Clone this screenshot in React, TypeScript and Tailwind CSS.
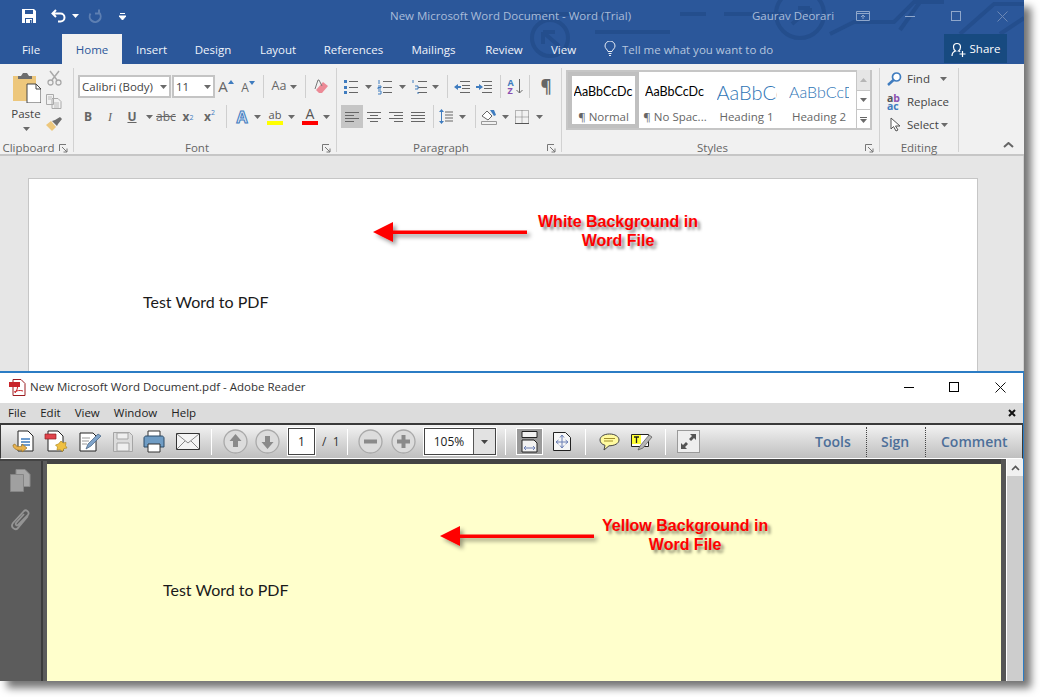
import React from "react";

const Caret = ({ color = "#6a6a6a" }: { color?: string }) => (
  <svg width="7" height="4" viewBox="0 0 7 4" className="shrink-0">
    <path d="M0 0h7L3.5 4z" fill={color} />
  </svg>
);

const Sep = ({ className = "" }: { className?: string }) => (
  <div className={`w-px h-[23px] bg-[#cfcfcf] shrink-0 ${className}`} />
);

const Launcher = () => (
  <svg width="9" height="9" viewBox="0 0 9 9">
    <path d="M.5 7V.5H7M3 3l5 5M8 4.5V8H4.5" fill="none" stroke="#777" />
  </svg>
);

const Lines = ({ kind }: { kind: "left" | "center" | "right" | "justify" }) => {
  const rows = {
    left: ["M1 1.5h14", "M1 4.5h9", "M1 7.5h14", "M1 10.5h9"],
    center: ["M1 1.5h14", "M4 4.5h8", "M1 7.5h14", "M4 10.5h8"],
    right: ["M1 1.5h14", "M6 4.5h9", "M1 7.5h14", "M6 10.5h9"],
    justify: ["M1 1.5h14", "M1 4.5h14", "M1 7.5h14", "M1 10.5h14"],
  }[kind];
  return (
    <svg width="16" height="12" viewBox="0 0 16 12">
      <path d={rows.join("")} stroke="#666" fill="none" />
    </svg>
  );
};

const ListIcon = ({ mode }: { mode: "bullet" | "number" | "multi" }) => (
  <svg width="16" height="16" viewBox="0 0 16 16">
    <path d="M6 2.5h9M6 8.5h9M6 13.5h9" stroke="#666" />
    {mode === "bullet" && <path d="M1 1h3v3H1zM1 7h3v3H1zM1 12h3v3H1z" fill="#3f7cbf" />}
    {mode === "number" && <path d="M2 1v4M1 7h3v1.5H1V10h3M1 12h3v3H1" stroke="#3f7cbf" fill="none" />}
    {mode === "multi" && <path d="M1 1v3M3 7h3v3H3M6 13v2" stroke="#3f7cbf" fill="none" />}
  </svg>
);

const Group = ({
  label,
  className,
  launcher = true,
  children,
}: {
  label: string;
  className: string;
  launcher?: boolean;
  children: React.ReactNode;
}) => (
  <div className={`relative h-[84px] border-r border-[#d2d2d2] shrink-0 ${className}`}>
    <div className="flex flex-col h-[72px]">{children}</div>
    <div className={`flex items-center justify-center h-[16px] text-[11.5px] leading-[16px] text-[#666] ${launcher ? "pr-[16px]" : ""}`}>{label}</div>
    {launcher && (
      <div className="absolute right-[5px] bottom-[-1px]">
        <Launcher />
      </div>
    )}
  </div>
);

const Row = ({ className = "", children }: { className?: string; children: React.ReactNode }) => (
  <div className={`flex items-center h-[23px] ${className}`}>{children}</div>
);

const Cell = ({ className, children }: { className: string; children: React.ReactNode }) => (
  <div className={`flex items-center justify-center shrink-0 h-full [&>svg]:shrink-0 ${className}`}>{children}</div>
);

function StyleTile({ sample, name, className, sampleClass }: { sample: string; name: string; className: string; sampleClass: string }) {
  return (
    <div className={`flex flex-col items-center shrink-0 h-full overflow-hidden ${className}`}>
      <div className={`h-[34px] mt-[3px] flex items-center w-[60px] overflow-hidden whitespace-nowrap ${sampleClass}`}>{sample}</div>
      <div className="text-[11.5px] text-[#666] leading-[16px] whitespace-nowrap">{name}</div>
    </div>
  );
}

const WordTitleBar = () => (
  <div className="relative flex items-center h-[34px] pb-[2px] text-[11.5px] text-[#a9bcd9]">
    <svg width="16" height="16" viewBox="0 0 16 16" className="ml-[21px] shrink-0">
      <path d="M1 1h12l2 2v12H1z" fill="#fff" />
      <path d="M4 2h8v4H4zM4 10h8v5H4z" fill="#2b579a" />
      <path d="M5 11h6v4H5z" fill="#fff" />
      <path d="M9 12h1.500v3H9z" fill="#2b579a" />
    </svg>
    <svg width="16" height="14" viewBox="0 0 16 14" className="ml-[14px] shrink-0">
      <path d="M5 1L1.500 4.500 5 8M2 4.500h7.500a3.800 3.800 0 0 1 0 8H7" fill="none" stroke="#fff" strokeWidth="2" />
    </svg>
    <div className="ml-[5px] mb-px">
      <Caret color="#fff" />
    </div>
    <svg width="15" height="15" viewBox="0 0 15 15" className="ml-[8px] shrink-0">
      <path d="M3 3.500a5.500 5.500 0 1 0 8.500 1M3 .5v4h4" fill="none" stroke="#5d7fb2" strokeWidth="2" transform="matrix(-1 0 0 1 15 0)" />
    </svg>
    <svg width="7" height="7" viewBox="0 0 7 7" className="ml-[17px] shrink-0">
      <path d="M1 .5h5M0 3h7L3.500 7z" stroke="#fff" strokeWidth="1" fill="#fff" />
    </svg>
    <div className="ml-[264px] whitespace-nowrap w-[362px]">New Microsoft Word Document - Word (Trial)</div>
    <div className="whitespace-nowrap w-[104px]">Gaurav Deorari</div>
    <svg width="14" height="10" viewBox="0 0 14 10" className="shrink-0">
      <path d="M.5.5h13v9H.5zM1 2.500h12M7 8V4M5 6l2-2 2 2" fill="none" stroke="#8fa7cb" />
    </svg>
    <div className="ml-[35px] w-[10px] h-px bg-[#8fa7cb]" />
    <div className="ml-[36px] w-[10px] h-[10px] border border-[#8fa7cb]" />
    <svg width="11" height="11" viewBox="0 0 11 11" className="ml-[36px] shrink-0">
      <path d="M.5.5l10 10M10.500.5l-10 10" stroke="#6c88b5" />
    </svg>
  </div>
);

const WordTabs = () => (
  <div className="relative flex items-stretch h-[30px] text-[11.5px] text-[#f0f4fa]">
    <Cell className="w-[62px] pt-[2px]">File</Cell>
    <Cell className="w-[60px] pt-[2px] bg-[#f1f1f1] text-[#2b579a]">Home</Cell>
    <Cell className="w-[59px] pt-[2px]">Insert</Cell>
    <Cell className="w-[64px] pt-[2px]">Design</Cell>
    <Cell className="w-[66px] pt-[2px]">Layout</Cell>
    <Cell className="w-[85px] pt-[2px]">References</Cell>
    <Cell className="w-[75px] pt-[2px]">Mailings</Cell>
    <Cell className="w-[66px] pt-[2px]">Review</Cell>
    <Cell className="w-[53px] pt-[2px]">View</Cell>
    <svg width="12" height="15" viewBox="0 0 12 15" className="ml-[14px] mt-[7px] shrink-0">
      <path d="M4 10.500C3.500 8.500 1 7.500 1 5a5 5 0 0 1 10 0c0 2.500-2.500 3.500-3 5.500zM4.500 12.500h3M5 14.500h2" fill="none" stroke="#e8edf5" />
    </svg>
    <div className="ml-[6px] w-[151px] pt-[2px] flex items-center whitespace-nowrap text-[#b6c6de]">Tell me what you want to do</div>
    <div className="ml-[171px] flex items-center justify-center gap-[4px] w-[63px] h-[29px] pt-px bg-[#174a80] text-white">
      <svg width="15" height="15" viewBox="0 0 15 15" className="shrink-0">
        <path d="M1 14c0-3 2-4.500 3.500-5C3 8 2.500 6.500 2.500 5a3.500 3.500 0 0 1 7 0c0 1.500-.5 3-2 4 .7.2 1.200.5 1.700.9M11.500 9v6M8.500 12h6" fill="none" stroke="#fff" strokeWidth="1.200" />
      </svg>
      Share
    </div>
  </div>
);

const ClipboardGroup = () => (
  <Group label="Clipboard" className="w-[74px]">
    <div className="flex">
      <div className="flex flex-col items-center w-[46px] pl-[6px] pt-[4px]">
        <svg width="29" height="31" viewBox="0 0 29 31">
          <path d="M1 4h23v25H1z" fill="#edc77c" />
          <path d="M6 4h3l2-3h4l2 3h3v3H6z" fill="#6e6e6e" />
          <path d="M15 12h9l5 5v14H15z" fill="#fff" stroke="#444" />
          <path d="M24 12v5h5" fill="none" stroke="#444" />
        </svg>
        <div className="text-[11.5px] leading-[16px] mt-[3px] text-[#444]">Paste</div>
        <div className="mt-[5px]">
          <Caret />
        </div>
      </div>
      <div className="flex flex-col items-center gap-[8px] w-[20px] ml-[-2px] pt-[2px]">
        <svg width="15" height="16" viewBox="0 0 15 16">
          <path d="M3 1l7 9M12 1L5 10" stroke="#a9a9a9" strokeWidth="1.500" />
          <circle cx="3.500" cy="12.500" r="2.500" fill="none" stroke="#a9a9a9" strokeWidth="1.300" />
          <circle cx="11.500" cy="12.500" r="2.500" fill="none" stroke="#a9a9a9" strokeWidth="1.300" />
        </svg>
        <svg width="16" height="15" viewBox="0 0 16 15">
          <path d="M.5.5h7v10h-7zM6 4.500h6l3 3v7H6z" fill="#f1f1f1" stroke="#aaa" />
          <path d="M8 9h5M8 11h5M8 13h5M2 3h4M2 5h3" stroke="#bbb" />
        </svg>
        <svg width="16" height="14" viewBox="0 0 16 14">
          <path d="M0 8l5-4 5 6-4 4z" fill="#edc77c" />
          <path d="M6 4l3-1 5-3 2 2-4 5-1 2z" fill="#6e6e6e" />
        </svg>
      </div>
    </div>
  </Group>
);

const FontGroup = () => (
  <Group label="Font" className="w-[263px]">
    <Row className="mt-[7px] ml-[4px]">
      <div className="flex items-center justify-between shrink-0 w-[93px] h-[23px] px-[2px] bg-white border-2 border-[#c4c4c4] text-[11.5px] text-[#444] whitespace-nowrap">
        Calibri (Body)
        <Caret />
      </div>
      <div className="flex items-center justify-between shrink-0 ml-px w-[43px] h-[23px] px-[2px] bg-white border-2 border-[#c4c4c4] text-[11.5px] text-[#444]">
        11
        <Caret />
      </div>
      <Cell className="w-[22px] text-[15px] text-[#666]">
        A<span className="mb-[10px]"><svg width="6" height="4" viewBox="0 0 6 4"><path d="M3 0l3 4H0z" fill="#3f7cbf" /></svg></span>
      </Cell>
      <Cell className="w-[22px] text-[12px] text-[#666] pt-[2px]">
        A<span className="mb-[10px]"><svg width="6" height="4" viewBox="0 0 6 4"><path d="M0 0h6L3 4z" fill="#3f7cbf" /></svg></span>
      </Cell>
      <Cell className="w-[4px]"><span /></Cell>
      <Sep />
      <Cell className="w-[41px] gap-[4px] text-[12.500px] text-[#666]">
        Aa
        <Caret />
      </Cell>
      <Sep />
      <Cell className="w-[30px]">
        <svg width="15" height="15" viewBox="0 0 15 15">
          <path d="M2 11l7-8 5 4-6 7H5z" fill="#ec8a96" />
          <path d="M1 10L4 1h1l3 6" fill="none" stroke="#777" />
        </svg>
      </Cell>
    </Row>
    <Row className="mt-[7px] ml-[3px] text-[#666]">
      <Cell className="w-[22px] font-bold text-[12px]">B</Cell>
      <Cell className="w-[22px] italic text-[12px] font-['Liberation_Serif',serif]">I</Cell>
      <Cell className="w-[22px] font-bold text-[12px] underline">U</Cell>
      <Cell className="w-[12px]"><Caret /></Cell>
      <Cell className="w-[22px] text-[12px] line-through">abc</Cell>
      <Cell className="w-[22px] font-bold text-[12px]">x<sub className="text-[7px] font-normal text-[#3f7cbf]">2</sub></Cell>
      <Cell className="w-[21px] font-bold text-[12px]">x<sup className="text-[7px] font-normal text-[#3f7cbf]">2</sup></Cell>
      <Cell className="w-[6px]"><span /></Cell>
      <Sep />
      <Cell className="w-[6px]"><span /></Cell>
      <Cell className="w-[18px] text-[16px] font-bold text-[#dce8f6] [-webkit-text-stroke:1px_#3f7cbf]">A</Cell>
      <Cell className="w-[12px]"><Caret /></Cell>
      <Cell className="w-[20px] ml-[2px]">
        <div className="flex flex-col items-center w-[16px]">
          <div className="text-[11px] leading-[11px] text-[#555]">ab</div>
          <div className="w-[16px] h-[4px] bg-[#ffff00] mt-px" />
        </div>
      </Cell>
      <Cell className="w-[12px]"><Caret /></Cell>
      <Cell className="w-[22px] ml-[2px]">
        <div className="flex flex-col items-center w-[16px]">
          <div className="text-[14px] leading-[12px] text-[#555]">A</div>
          <div className="w-[16px] h-[4px] bg-[#ff0000] mt-px" />
        </div>
      </Cell>
      <Cell className="w-[10px]"><Caret /></Cell>
    </Row>
  </Group>
);

const ParagraphGroup = () => (
  <Group label="Paragraph" className="w-[225px]">
    <Row className="mt-[7px] ml-[5px]">
      <Cell className="w-[18px]"><ListIcon mode="bullet" /></Cell>
      <Cell className="w-[16px]"><Caret /></Cell>
      <Cell className="w-[18px]"><ListIcon mode="number" /></Cell>
      <Cell className="w-[16px]"><Caret /></Cell>
      <Cell className="w-[20px]"><ListIcon mode="multi" /></Cell>
      <Cell className="w-[10px]"><Caret /></Cell>
      <Cell className="w-[7px]"><span /></Cell>
      <Sep />
      <Cell className="w-[28px]">
        <svg width="16" height="12" viewBox="0 0 16 12">
          <path d="M6 .5h10M8 4.500h8M8 7.500h8M6 11.500h10" stroke="#666" />
          <path d="M0 6l4-3v2h3v2H4v2z" fill="#3f7cbf" />
        </svg>
      </Cell>
      <Cell className="w-[16px]">
        <svg width="16" height="12" viewBox="0 0 16 12">
          <path d="M6 .5h10M8 4.500h8M8 7.500h8M6 11.500h10" stroke="#666" />
          <path d="M7 6L3 3v2H0v2h3v2z" fill="#3f7cbf" />
        </svg>
      </Cell>
      <Cell className="w-[8px]"><span /></Cell>
      <Sep />
      <Cell className="w-[28px] gap-[2px]">
        <div className="flex flex-col text-[9px] leading-[8px] font-bold">
          <span className="text-[#3f7cbf]">A</span>
          <span className="text-[#8a4fb0]">Z</span>
        </div>
        <svg width="7" height="15" viewBox="0 0 7 15">
          <path d="M3.500 0v14M.5 11l3 3 3-3" fill="none" stroke="#666" />
        </svg>
      </Cell>
      <Sep />
      <Cell className="w-[32px] text-[17px] font-bold text-[#666]">¶</Cell>
    </Row>
    <Row className="mt-[7px] ml-[4px]">
      <Cell className="w-[22px] bg-[#c6c6c6]"><Lines kind="left" /></Cell>
      <Cell className="w-[22px]"><Lines kind="center" /></Cell>
      <Cell className="w-[22px]"><Lines kind="right" /></Cell>
      <Cell className="w-[22px]"><Lines kind="justify" /></Cell>
      <Cell className="w-[4px]"><span /></Cell>
      <Sep />
      <Cell className="w-[24px]">
        <svg width="14" height="15" viewBox="0 0 14 15">
          <path d="M6 3h8M6 6h8M6 9h8M6 12h8" stroke="#666" />
          <path d="M2.500 0L5 3H0zM2.500 15L0 12h5zM2 3h1v9H2z" fill="#3f7cbf" />
        </svg>
      </Cell>
      <Cell className="w-[8px]"><Caret /></Cell>
      <Cell className="w-[9px]"><span /></Cell>
      <Sep />
      <Cell className="w-[26px]">
        <svg width="16" height="16" viewBox="0 0 16 16">
          <path d="M1 7l5-5 5 5-4 4z" fill="#fff" stroke="#666" />
          <path d="M9 1h4l2 5-2 1z" fill="#3f7cbf" />
          <path d="M.5 12.500h15v3H.5z" fill="#f1f1f1" stroke="#999" />
        </svg>
      </Cell>
      <Cell className="w-[7px]"><Caret /></Cell>
      <Cell className="w-[26px]">
        <svg width="14" height="14" viewBox="0 0 14 14">
          <path d="M.5.5h13v13H.5zM7 .5v13M.5 7h13" fill="none" stroke="#777" strokeDasharray="1 1" />
          <path d="M0 13.500h14" stroke="#555" />
        </svg>
      </Cell>
      <Cell className="w-[8px]"><Caret /></Cell>
    </Row>
  </Group>
);

const StylesGroup = () => (
  <Group label="Styles" className="w-[318px]">
    <div className="flex h-[60px] mt-[2px] ml-[4px] w-[306px] bg-white border-2 border-[#c6c6c6]">
      <StyleTile
        sample="AaBbCcDc"
        name="¶ Normal"
        className="w-[71px] shadow-[inset_0_0_0_4px_#c0c0c0]"
        sampleClass="text-[12.500px] text-black font-['Lato',sans-serif]"
      />
      <StyleTile sample="AaBbCcDc" name="¶ No Spac..." className="w-[72px]" sampleClass="text-[12.500px] text-black font-['Lato',sans-serif]" />
      <StyleTile sample="AaBbCc" name="Heading 1" className="w-[71px]" sampleClass="text-[20px] font-light text-[#2e74b5] font-['Lato',sans-serif]" />
      <StyleTile sample="AaBbCcD" name="Heading 2" className="w-[74px]" sampleClass="text-[16px] font-light text-[#2e74b5] font-['Lato',sans-serif]" />
      <div className="flex flex-col w-[14px] shrink-0 border-l border-[#c6c6c6] mt-[-2px] mb-[-2px] divide-y divide-[#c6c6c6]">
        <div className="flex items-center justify-center h-[21px] bg-[#e6e6e6]">
          <svg width="7" height="4" viewBox="0 0 7 4"><path d="M3.500 0L7 4H0z" fill="#b5b5b5" /></svg>
        </div>
        <div className="flex items-center justify-center h-[19px]"><Caret /></div>
        <div className="flex flex-col items-center justify-center gap-px h-[20px]">
          <div className="w-[7px] h-px bg-[#666]" />
          <Caret />
        </div>
      </div>
    </div>
  </Group>
);

const EditingGroup = () => (
  <Group label="Editing" className="w-[79px]" launcher={false}>
    <div className="flex flex-col pl-[7px] mt-[-1px] text-[11.5px] text-[#444]">
      <div className="flex items-center h-[23px]">
        <svg width="15" height="14" viewBox="0 0 15 14" className="shrink-0">
          <circle cx="9.500" cy="5" r="4" fill="#fff" stroke="#3f7cbf" strokeWidth="1.700" />
          <path d="M6.500 8L1 13" stroke="#3f7cbf" strokeWidth="2.500" />
        </svg>
        <span className="ml-[5px]">Find</span>
        <span className="ml-[10px]"><Caret /></span>
      </div>
      <div className="flex items-center h-[23px]">
        <div className="w-[16px] text-[10.500px] leading-[8px] font-bold text-[#555] shrink-0">
          a<span className="text-[#8a4fb0]">b</span>
          <br />
          <span className="text-[#3f7cbf]">ac</span>
        </div>
        <span className="ml-[4px]">Replace</span>
      </div>
      <div className="flex items-center h-[23px]">
        <svg width="11" height="15" viewBox="0 0 11 15" className="ml-[3px] shrink-0">
          <path d="M1 1v11l2.500-2.500L6 14l2-1-2.500-4H10z" fill="#fff" stroke="#555" />
        </svg>
        <span className="ml-[6px]">Select</span>
        <span className="ml-[2px]"><Caret /></span>
      </div>
    </div>
  </Group>
);

const WordWindow = () => (
  <div className="flex flex-col h-[371px] shrink-0">
    <div className="relative bg-[#2b579a] overflow-hidden">
      <svg width="1024" height="64" viewBox="0 0 1024 64" className="absolute inset-0">
        <g fill="none" stroke="#244e8d" strokeWidth="4">
          <path d="M530 14h80M595 32h75M680 14h26M724 14h60" />
          <circle cx="550" cy="38" r="18" />
          <circle cx="800" cy="14" r="24" />
          <path d="M543 32l16 14M543 32h12M543 32v12M792 24l18-16M810 8h-12M810 8v12" />
          <path d="M830 34l24-12h40l20-20h30M900 30l20-28M960 34l34-30h30M1000 34l24-16" />
        </g>
      </svg>
      <WordTitleBar />
      <WordTabs />
    </div>
    <div className="flex h-[92px] pt-[4px] bg-[#f1f1f1] border-b-2 border-[#c6c6c6] relative shrink-0">
      <ClipboardGroup />
      <FontGroup />
      <ParagraphGroup />
      <StylesGroup />
      <EditingGroup />
      <svg width="11" height="6" viewBox="0 0 11 6" className="absolute left-[1003px] top-[78px]">
        <path d="M1 5l4.500-4L10 5" fill="none" stroke="#666" strokeWidth="2" />
      </svg>
    </div>
    <div className="flex-1 min-h-0 bg-[#e6e6e6] pl-[28px] pt-[22px] overflow-hidden border-r border-[#d0d0d0]">
      <div className="w-[950px] h-[300px] bg-white border border-[#c6c6c6] pl-[114px] pt-[112px]">
        <div className="font-['Lato',sans-serif] text-[16px] leading-[22px] text-[#1a1a1a]">Test Word to PDF</div>
      </div>
    </div>
  </div>
);

const ToolIcon = ({ className, children }: { className: string; children: React.ReactNode }) => (
  <Cell className={className}>{children}</Cell>
);

const TSep = () => <div className="w-px h-[26px] bg-[#555] border-r border-white shrink-0" />;

const RoundBtn = ({ d }: { d: string }) => (
  <svg width="25" height="25" viewBox="0 0 25 25" className="shrink-0">
    <circle cx="12.500" cy="12.500" r="11.500" fill="#dcdcdc" stroke="#a9a9a9" strokeWidth="1.300" />
    <path d={d} fill="#8a8a8a" />
  </svg>
);

const ReaderToolbar = () => (
  <div className="flex items-center h-[36px] shrink-0 bg-gradient-to-b from-[#f2f2f2] to-[#bfbfbf] border-t-2 border-b border-t-[#3a3a3a] border-b-white border-x border-x-[#3a3a3a]">
    <ToolIcon className="w-[44px]">
      <svg width="23" height="23" viewBox="0 0 23 23">
        <path d="M6 1h10l5 5v15H6z" fill="#fff" stroke="#222" />
        <path d="M9 9h9M9 12h9M9 15h9" stroke="#3f7cbf" strokeWidth="1.500" />
        <path d="M1 15c0 4 5 6 9 5v2l5-4-5-4v2c-3 1-6 1-7-2z" fill="#e9b24d" stroke="#9b7424" strokeWidth=".7" />
      </svg>
    </ToolIcon>
    <ToolIcon className="w-[22px]">
      <svg width="24" height="23" viewBox="0 0 24 23">
        <path d="M4 1h10l5 5v15H4z" fill="#fff" stroke="#222" />
        <path d="M1 4h11v5H1z" fill="#e0434b" stroke="#8c1f24" strokeWidth=".7" />
        <path d="M17 11l2 2 3-.5-.5 3 1.500 2.500-3 .5-1.500 3-2.500-2-3 .5.500-3-2-2 3-1z" fill="#f0c040" stroke="#b08a20" strokeWidth=".7" />
      </svg>
    </ToolIcon>
    <ToolIcon className="w-[46px]">
      <svg width="22" height="20" viewBox="0 0 22 20">
        <path d="M1 1h13l3 3v15H1z" fill="#fff" stroke="#222" />
        <path d="M3 6h8M3 9h7M3 12h5" stroke="#999" />
        <path d="M7 17l2-5L19 2l3 2-10 10z" fill="#7fa3c9" stroke="#44607f" strokeWidth=".7" />
      </svg>
    </ToolIcon>
    <ToolIcon className="w-[19px]">
      <svg width="20" height="20" viewBox="0 0 20 20">
        <path d="M.5.5h16l3 3v16H.5z" fill="#dcdcdc" stroke="#a5a5a5" />
        <path d="M4 1h11v6H4zM4 11h12v8H4z" fill="#efefef" stroke="#a5a5a5" />
      </svg>
    </ToolIcon>
    <ToolIcon className="w-[44px]">
      <svg width="22" height="23" viewBox="0 0 22 23">
        <path d="M5 1h12v6H5z" fill="#fff" stroke="#333" />
        <path d="M1 8c0-1 1-2 2-2h16c1 0 2 1 2 2v9H1z" fill="#6f9cc4" stroke="#2c4a66" />
        <path d="M5 14h12v8H5z" fill="#fff" stroke="#333" />
      </svg>
    </ToolIcon>
    <ToolIcon className="w-[24px]">
      <svg width="24" height="17" viewBox="0 0 24 17">
        <path d="M.5.5h23v16H.5z" fill="#f4f4f4" stroke="#333" />
        <path d="M1 1l11 9 11-9M1 16l8-8M23 16l-8-8" fill="none" stroke="#888" />
      </svg>
    </ToolIcon>
    <div className="w-[11px] shrink-0" />
    <TSep />
    <ToolIcon className="w-[46px]"><RoundBtn d="M12.500 5l6 7h-3.500v6h-5v-6H6.500z" /></ToolIcon>
    <ToolIcon className="w-[18px]"><RoundBtn d="M12.500 20l-6-7H10V7h5v6h3.500z" /></ToolIcon>
    <div className="ml-[12px] flex items-center justify-center shrink-0 w-[27px] h-[27px] bg-white border border-[#444] outline outline-1 outline-white text-[12px] text-[#222]">1</div>
    <div className="ml-[7px] w-[25px] shrink-0 text-[12px] text-[#333] whitespace-nowrap">/&nbsp;&nbsp;1</div>
    <TSep />
    <ToolIcon className="w-[45px]"><RoundBtn d="M6 10.500h13v4H6z" /></ToolIcon>
    <ToolIcon className="w-[21px]"><RoundBtn d="M6 10.500h4.500V6h4v4.500H19v4h-4.500V19h-4v-4.500H6z" /></ToolIcon>
    <div className="ml-[10px] flex w-[72px] h-[27px] bg-white border border-[#444] outline outline-1 outline-white shrink-0">
      <div className="flex-1 flex items-center justify-center text-[12px] text-[#222]">105%</div>
      <div className="flex items-center justify-center w-[22px] bg-[#e2e2e2] border-l border-[#555]"><Caret color="#444" /></div>
    </div>
    <div className="w-[9px] shrink-0" />
    <TSep />
    <div className="ml-[10px] flex items-center justify-center w-[27px] h-[27px] bg-[#9a9a9a] border border-white shrink-0">
      <svg width="18" height="22" viewBox="0 0 18 22">
        <path d="M1 .5h15v6H1z" fill="#f2f2f2" stroke="#222" />
        <path d="M1 9h12l3 3v9H1z" fill="#f2f2f2" stroke="#222" />
        <path d="M3 17h11M3 17l2-2M3 17l2 2M14 17l-2-2M14 17l-2 2" stroke="#6b7fb5" fill="none" />
      </svg>
    </div>
    <ToolIcon className="w-[38px]">
      <svg width="18" height="19" viewBox="0 0 18 19">
        <path d="M.5.5h12l5 5v13H.5z" fill="#f6f6f6" stroke="#222" />
        <path d="M9 3v13M3 10h12M9 3L7 5.500M9 3l2 2.500M9 16l-2-2.500M9 16l2-2.500M3 10l2.500-2M3 10l2.500 2M15 10l-2.500-2M15 10l-2.500 2" stroke="#6b7fb5" fill="none" />
      </svg>
    </ToolIcon>
    <div className="w-[4px] shrink-0" />
    <TSep />
    <ToolIcon className="w-[46px]">
      <svg width="21" height="18" viewBox="0 0 21 18">
        <path d="M10.500 1C5 1 1 3.500 1 7c0 2.500 2 4.500 5 5.300L5 17l5-4.200c5.500 0 10-2.300 10-5.800S16 1 10.500 1z" fill="#fffaa0" stroke="#444" />
        <path d="M5 5.500h11M5 8h9" stroke="#a08d2a" />
      </svg>
    </ToolIcon>
    <ToolIcon className="w-[20px]">
      <svg width="22" height="19" viewBox="0 0 22 19">
        <path d="M.5 2.500h17v12H.5z" fill="#fff" stroke="#222" />
        <path d="M1 3h9v9H1z" fill="#ffff33" />
        <path d="M3 5h5M5.500 5v6" stroke="#222" strokeWidth="1.300" />
        <path d="M7 18l2-4 9-11 3 2-9 11z" fill="#b5b5b5" stroke="#555" strokeWidth=".7" />
      </svg>
    </ToolIcon>
    <div className="w-[13px] shrink-0" />
    <TSep />
    <div className="ml-[11px] flex items-center justify-center w-[23px] h-[23px] bg-[#eee] border border-[#9a9a9a] shrink-0">
      <svg width="19" height="19" viewBox="0 0 19 19">
        <path d="M11 2h6v6l-2-2-3 3-2-2 3-3zM8 17H2v-6l2 2 3-3 2 2-3 3z" fill="#555" />
      </svg>
    </div>
    <div className="ml-[115px] w-[37px] text-[14px] font-semibold text-[#4d6f99]">Tools</div>
    <div className="ml-[14px] h-[30px] border-l border-dotted border-[#444]" />
    <div className="ml-[14px] w-[30px] text-[14px] font-semibold text-[#4d6f99]">Sign</div>
    <div className="ml-[14px] h-[30px] border-l border-dotted border-[#444]" />
    <div className="ml-[15px] text-[14px] font-semibold text-[#4d6f99] whitespace-nowrap">Comment</div>
  </div>
);

const ReaderWindow = () => (
  <div className="flex flex-col h-[310px] shrink-0 border-t-2 border-r border-[#2b7cc4] bg-white min-h-0">
    <div className="flex items-center h-[30px] pb-[2px] shrink-0 text-[11.5px] text-[#333]">
      <svg width="17" height="17" viewBox="0 0 17 17" className="ml-[9px] shrink-0">
        <path d="M4 .5h8l4 4v12H4z" fill="#fff" stroke="#9b1c20" />
        <path d="M0 3h11v5H0z" fill="#c8242a" />
        <path d="M6 14c2-2 3-6 2.500-8.500M5 13c3-1.500 6-2 9-1" fill="none" stroke="#c8242a" />
      </svg>
      <span className="ml-[4px] whitespace-nowrap">New Microsoft Word Document.pdf - Adobe Reader</span>
      <div className="ml-auto w-[10px] h-px bg-black" />
      <div className="ml-[35px] w-[10px] h-[10px] border border-black" />
      <svg width="11" height="11" viewBox="0 0 11 11" className="ml-[36px] mr-[17px] shrink-0">
        <path d="M.5.5l10 10M10.500.5l-10 10" stroke="#111" />
      </svg>
    </div>
    <div className="flex items-center h-[20px] shrink-0 bg-[#dcdcdc] text-[11.5px] text-[#222] pl-[8px] gap-[14px]">
      <span>File</span>
      <span>Edit</span>
      <span>View</span>
      <span>Window</span>
      <span>Help</span>
      <svg width="8" height="8" viewBox="0 0 8 8" className="ml-auto mr-[7px] shrink-0">
        <path d="M1 1l6 6M7 1L1 7" stroke="#111" strokeWidth="2" />
      </svg>
    </div>
    <ReaderToolbar />
    <div className="flex-1 min-h-0 flex bg-[#444] pt-[5px] overflow-hidden">
      <div className="flex flex-col items-center w-[43px] mt-[-3px] bg-[#5c5c5c] border-r-2 border-[#3c3c3c] shrink-0 pt-[8px] gap-[16px]">
        <svg width="21" height="23" viewBox="0 0 21 23">
          <path d="M6 .5h9l5 5v12H6z" fill="#a8a8a8" stroke="#8a8a8a" />
          <path d="M.5 5.500h13v17H.5z" fill="#a0a0a0" stroke="#858585" />
        </svg>
        <svg width="21" height="24" viewBox="0 0 21 24">
          <path d="M18 8L8 20c-3 3-8-1-5-5L14 3c2-2 6 1 4 4L8 17c-1 1-3 0-2-2l8-9" fill="none" stroke="#949494" strokeWidth="1.800" />
        </svg>
      </div>
      <div className="w-[4px] mt-[-3px] bg-[#5c5c5c] shrink-0" />
      <div className="w-[954px] shrink-0 bg-[#ffffcc] pl-[116px] pt-[115px]">
        <div className="font-['Lato',sans-serif] text-[16px] leading-[22px] text-[#1a1a1a]">Test Word to PDF</div>
      </div>
      <div className="flex-1 flex mt-[-5px] bg-[#555] pl-[5px]">
        <div className="flex-1 border-l border-white bg-[#cdcdcd]">
          <div className="flex items-center justify-center h-[17px] bg-[#f0f0f0]">
            <svg width="9" height="6" viewBox="0 0 9 6"><path d="M1 5l3.500-3.500L8 5" fill="none" stroke="#555" strokeWidth="1.600" /></svg>
          </div>
        </div>
      </div>
    </div>
  </div>
);

const Callout = ({ className, line1, line2 }: { className: string; line1: string; line2: string }) => (
  <div className={`absolute text-center text-[16px] leading-[19px] font-bold text-[#ff0000] whitespace-nowrap font-['Liberation_Sans',sans-serif] [text-shadow:3px_3px_3px_rgba(0,0,0,0.45)] ${className}`}>
    {line1}
    <br />
    {line2}
  </div>
);

const Arrow = ({ className, width }: { className: string; width: number }) => (
  <svg width={width + 10} height="30" viewBox={`0 0 ${width + 10} 30`} className={`absolute ${className}`}>
    <defs>
      <filter id={`shadow-${width}`} x="-10%" y="-50%" width="120%" height="200%">
        <feDropShadow dx="3" dy="3" stdDeviation="2" floodColor="#000" floodOpacity="0.4" />
      </filter>
    </defs>
    <path d={`M0 10L20 0v8.500H${width}v3.500H20V20z`} fill="#ff0000" filter={`url(#shadow-${width})`} />
  </svg>
);

export default function App() {
  return (
    <div className="relative w-[1040px] h-[697px] bg-white overflow-hidden font-['Open_Sans',sans-serif]">
      <div className="flex flex-col w-[1024px] h-[681px] overflow-hidden shadow-[7px_7px_8px_rgba(0,0,0,0.55)]">
        <WordWindow />
        <ReaderWindow />
      </div>
      <Arrow className="left-[373px] top-[222px]" width={154} />
      <Callout className="left-[538px] top-[212px]" line1="White Background in" line2="Word File" />
      <Arrow className="left-[440px] top-[526px]" width={154} />
      <Callout className="left-[602px] top-[516px]" line1="Yellow Background in" line2="Word File" />
    </div>
  );
}
